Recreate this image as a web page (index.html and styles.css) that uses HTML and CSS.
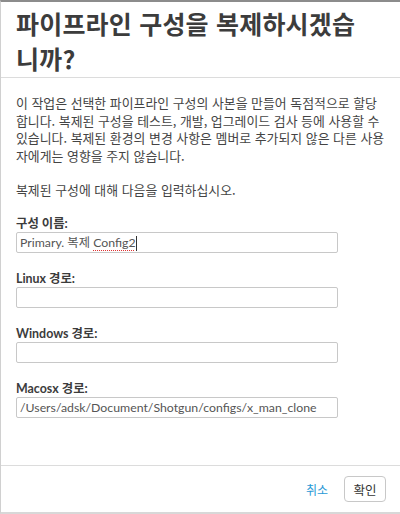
FILE: index.html
```html
<!DOCTYPE html>
<html lang="ko">
<head>
<meta charset="utf-8">
<link rel="stylesheet" href="styles.css">
</head>
<body>
<div class="dialog">
  <header class="head">
    <h1 class="title">파이프라인 구성을 복제하시겠습니까?</h1>
  </header>
  <main class="content">
    <p class="desc">이 작업은 선택한 파이프라인 구성의 사본을 만들어 독점적으로 할당합니다. 복제된 구성을 테스트, 개발, 업그레이드 검사 등에 사용할 수 있습니다. 복제된 환경의 변경 사항은 멤버로 추가되지 않은 다른 사용자에게는 영향을 주지 않습니다.</p>
    <p class="desc">복제된 구성에 대해 다음을 입력하십시오.</p>
    <div class="field">
      <label class="label">구성 이름:</label>
      <div class="input">Primary. 복제 <span class="spell">Config2</span><span class="caret"></span></div>
    </div>
    <div class="field">
      <label class="label">Linux 경로:</label>
      <div class="input"></div>
    </div>
    <div class="field">
      <label class="label">Windows 경로:</label>
      <div class="input"></div>
    </div>
    <div class="field">
      <label class="label">Macosx 경로:</label>
      <div class="input">/Users/adsk/Document/Shotgun/configs/x_man_clone</div>
    </div>
  </main>
  <footer class="foot">
    <a class="cancel">취소</a>
    <button class="ok">확인</button>
  </footer>
</div>
</body>
</html>
```
FILE: styles.css
```css
html, body { margin: 0; padding: 0; background: #fff; }
body { font-family: "Lato", "Noto Sans CJK KR", sans-serif; color: #3c3c3c; }
.dialog {
  width: 400px; height: 514px; box-sizing: border-box;
  border-top: 2px solid #8c8c8c; border-left: 1px solid #d0d0d0; border-bottom: 2px solid #d8d8d8;
  display: flex; flex-direction: column;
}
.head { border-bottom: 1px solid #dcdcdc; padding: 4px 16px 8px 15px; height: 76px; box-sizing: border-box; }
.title { margin: 0; width: 356px; font-family: "Noto Sans CJK KR", sans-serif; font-weight: 700; font-size: 25px; line-height: 35px; color: #3c3c3c; letter-spacing: 0.2px; }
.content { flex: 1; padding: 16px 12px 0 15px; }
.desc { margin: 0 0 17px; width: 372px; font-family: "Noto Sans CJK KR", sans-serif; font-size: 12.9px; line-height: 17.5px; color: #444; }
.field { margin-bottom: 18px; }
.label { display: block; font-size: 12.4px; font-weight: 700; line-height: 16px; margin: 0; color: #3c3c3c; font-family: "Lato", "Noto Sans CJK KR", sans-serif; }
.input { width: 322px; height: 21px; box-sizing: border-box; border: 1px solid #c8c8c8; border-radius: 2px; padding: 0 3px; font-size: 12.3px; line-height: 19px; color: #555; white-space: nowrap; overflow: hidden; font-family: "Lato", "Noto Sans CJK KR", sans-serif; }
.spell { text-decoration: underline dotted #e03030; text-decoration-thickness: 1px; text-underline-offset: 3px; }
.caret { display: inline-block; width: 1px; height: 15px; background: #333; vertical-align: middle; }
.foot { height: 46px; border-top: 1px solid #dcdcdc; display: flex; align-items: center; justify-content: flex-end; padding: 0 14px 0 0; gap: 16px; }
.cancel { color: #2a9ad6; font-family: "Noto Sans CJK KR", sans-serif; font-size: 12px; }
.ok { font-family: "Noto Sans CJK KR", sans-serif; font-size: 12.5px; color: #333; background: #fff; border: 1px solid #c8c8c8; border-radius: 4px; width: 42px; height: 26px; padding: 0; }
```
